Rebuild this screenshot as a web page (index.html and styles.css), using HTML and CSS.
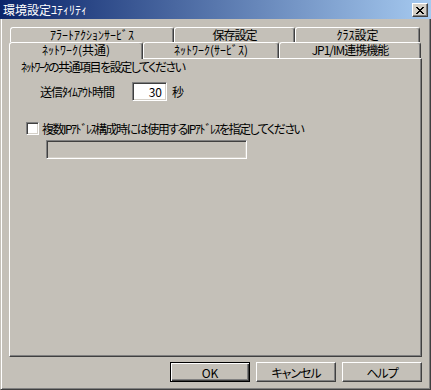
FILE: index.html
```html
<!DOCTYPE html>
<html lang="ja">
<head>
    <meta charset="UTF-8">
    <meta name="viewport" content="width=device-width, initial-scale=1.0">
    <title>環境設定ﾕﾃｨﾘﾃｨ</title>
    <link rel="stylesheet" href="styles.css">
</head>
<body>
    <div class="window">
        <div class="titlebar">
            <span class="title">環境設定ﾕﾃｨﾘﾃｨ</span>
            <button class="close">
                <svg width="8" height="7" viewBox="0 0 8 7" shape-rendering="crispEdges">
                    <path d="M0 0h2v1h-2z M6 0h2v1h-2z M1 1h2v1h-2z M5 1h2v1h-2z M2 2h4v1h-4z M3 3h2v1h-2z M2 4h4v1h-4z M1 5h2v1h-2z M5 5h2v1h-2z M0 6h2v1h-2z M6 6h2v1h-2z" fill="#000"/>
                </svg>
            </button>
        </div>
        <div class="client">
            <div class="tabs">
                <div class="tabrow back">
                    <div class="tab alert">ｱﾗｰﾄｱｸｼｮﾝｻｰﾋﾞｽ</div>
                    <div class="tab save tight">保存設定</div>
                    <div class="tab klass">ｸﾗｽ設定</div>
                </div>
                <div class="tabrow front">
                    <div class="tab selected net">ﾈｯﾄﾜｰｸ(共通)</div>
                    <div class="tab service">ﾈｯﾄﾜｰｸ(ｻｰﾋﾞｽ)</div>
                    <div class="tab jp1 tight">JP1/IM連携機能</div>
                </div>
            </div>
            <div class="panel">
                <div class="intro tighter">ﾈｯﾄﾜｰｸの共通項目を設定してください</div>
                <div class="timeout">
                    <span class="label tight">送信ﾀｲﾑｱｳﾄ時間</span>
                    <div class="field num">30</div>
                    <span class="unit">秒</span>
                </div>
                <div class="check">
                    <span class="box"></span>
                    <span class="tighter">複数IPｱﾄﾞﾚｽ構成時には使用するIPｱﾄﾞﾚｽを指定してください</span>
                </div>
                <div class="field ipbox"></div>
            </div>
            <div class="buttons">
                <button class="btn default">OK</button>
                <button class="btn tight">キャンセル</button>
                <button class="btn tight">ヘルプ</button>
            </div>
        </div>
    </div>
</body>
</html>
```

FILE: styles.css
```css
body {
    margin: 0;
    font-family: "Noto Sans CJK JP", sans-serif;
    font-size: 12px;
    font-feature-settings: "palt";
    color: #000;
}

.tight {
    letter-spacing: -1px;
}

.tighter {
    letter-spacing: -1.5px;
}

.window {
    width: 431px;
    height: 390px;
    background-color: #c4c0b8;
}

.titlebar {
    height: 19px;
    display: flex;
    justify-content: space-between;
    align-items: center;
    padding: 0 3px 0 3px;
    background: linear-gradient(to right, #0a246a, #a6caf0);
    box-sizing: border-box;
}

.title {
    color: #fff;
    line-height: 14px;
}

.close {
    width: 16px;
    height: 14px;
    padding: 0;
    margin-top: 1px;
    display: flex;
    align-items: center;
    justify-content: center;
    background-color: #d4d0c8;
    border: 1px solid;
    border-color: #fff #404040 #404040 #fff;
    box-shadow: inset -1px -1px #808080;
}

.client {
    height: 371px;
    box-sizing: border-box;
    padding: 8px 0 0 8px;
    border-style: solid;
    border-width: 0 1px 1px 1px;
    border-color: #404040 #404040 #404040 #c4c0b8;
    box-shadow: inset 1px 0 #fff, inset -1px 0 #808080, inset 0 -1px #808080;
}

.tabrow {
    display: flex;
}

.tabrow.back {
    margin-left: 1px;
    height: 15px;
}

.tabrow.front {
    height: 16px;
}

.tab {
    box-sizing: border-box;
    text-align: center;
    border-style: solid;
    border-width: 1px 1px 0 1px;
    border-color: #fff #404040 transparent #fff;
    border-radius: 3px 3px 0 0;
    box-shadow: inset -1px 0 #808080;
    background-color: #c4c0b8;
    overflow: hidden;
}

.back .tab {
    line-height: 13px;
    height: 15px;
}

.front .tab {
    line-height: 13px;
    height: 16px;
}

.alert { width: 164px; }
.save { width: 121px; }
.klass { width: 125px; }
.net { width: 134px; }
.service { width: 136px; }
.jp1 { width: 142px; }

.tab.selected {
    position: relative;
    z-index: 1;
    height: 17px;
}

.panel {
    width: 413px;
    height: 299px;
    box-sizing: border-box;
    padding: 1px 0 0 11px;
    border-style: solid;
    border-width: 1px 1px 1px 1px;
    border-color: #fff #404040 #404040 #fff;
    box-shadow: inset -1px -1px #808080;
}

.intro {
    line-height: 14px;
}

.timeout {
    display: flex;
    align-items: center;
    margin-top: 8px;
    padding-left: 19px;
}

.label {
    width: 92px;
}

.field {
    box-sizing: border-box;
    height: 19px;
    border: 1px solid;
    border-color: #808080 #fff #fff #808080;
    box-shadow: inset 1px 1px #404040, inset -1px -1px #d4d0c8;
}

.num {
    width: 35px;
    background-color: #fff;
    text-align: right;
    padding-right: 4px;
    line-height: 17px;
}

.unit {
    margin-left: 5px;
}

.check {
    display: flex;
    align-items: center;
    gap: 3px;
    height: 13px;
    margin-top: 21px;
    margin-left: 5px;
}

.box {
    width: 13px;
    height: 13px;
    box-sizing: border-box;
    background-color: #fff;
    border: 1px solid;
    border-color: #808080 #fff #fff #808080;
    box-shadow: inset 1px 1px #404040, inset -1px -1px #d4d0c8;
}

.ipbox {
    width: 201px;
    margin-top: 5px;
    margin-left: 25px;
}

.buttons {
    display: flex;
    gap: 6px;
    margin-top: 5px;
    padding-left: 161px;
}

.btn {
    width: 80px;
    height: 20px;
    padding: 0;
    font: inherit;
    color: #000;
    background-color: #c4c0b8;
    border: 1px solid;
    border-color: #fff #404040 #404040 #fff;
    box-shadow: inset -1px -1px #808080;
}

.btn.tight {
    letter-spacing: -1px;
}

.btn.default {
    border-color: #000;
    box-shadow: inset 1px 1px #fff, inset -1px -1px #404040, inset -2px -2px #808080;
}
```
